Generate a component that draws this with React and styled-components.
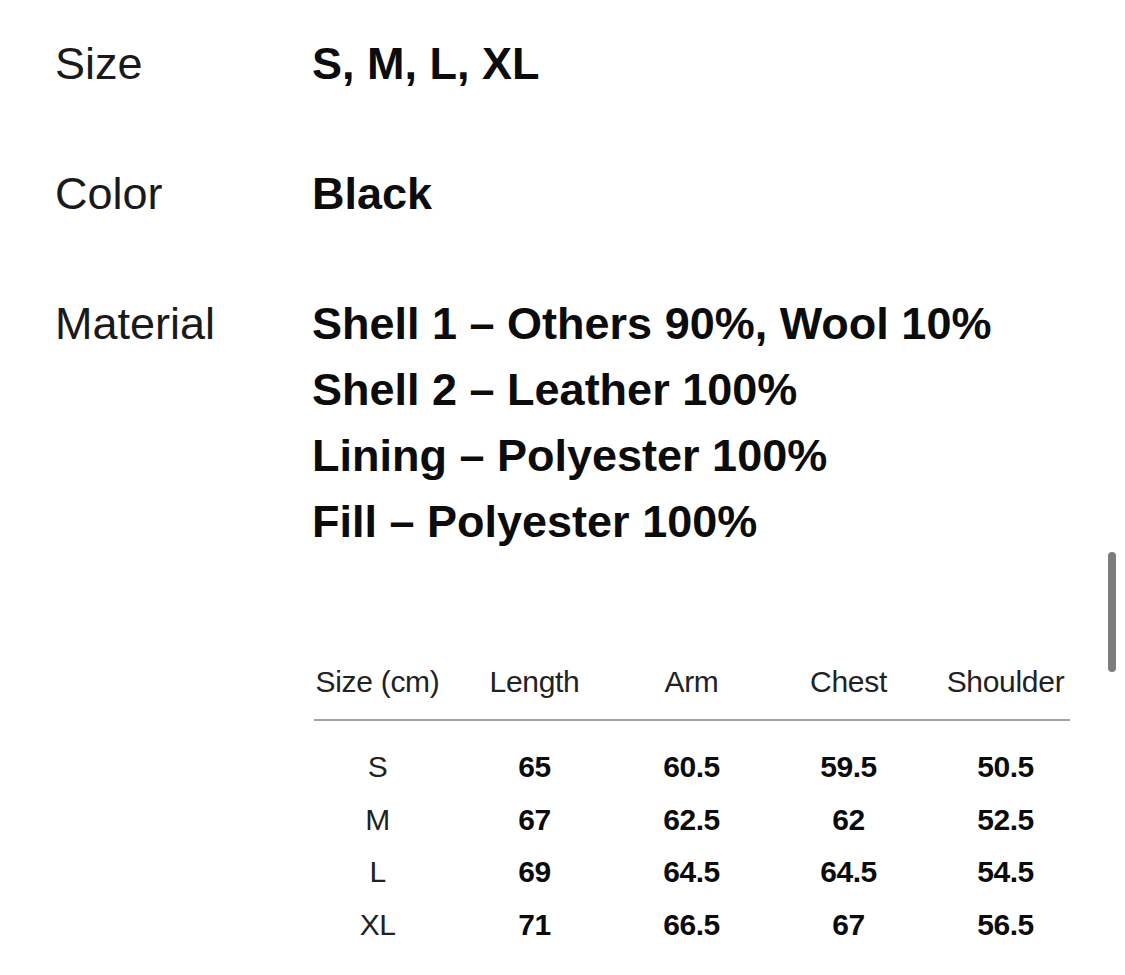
import React from 'react';
import styled, { createGlobalStyle } from 'styled-components';

const specs = [
  { label: 'Size', values: ['S, M, L, XL'] },
  { label: 'Color', values: ['Black'] },
  {
    label: 'Material',
    values: [
      'Shell 1 – Others 90%, Wool 10%',
      'Shell 2 – Leather 100%',
      'Lining – Polyester 100%',
      'Fill – Polyester 100%',
    ],
  },
];

const headers = ['Size (cm)', 'Length', 'Arm', 'Chest', 'Shoulder'];

const rows = [
  ['S', '65', '60.5', '59.5', '50.5'],
  ['M', '67', '62.5', '62', '52.5'],
  ['L', '69', '64.5', '64.5', '54.5'],
  ['XL', '71', '66.5', '67', '56.5'],
];

export default function App() {
  return (
    <>
      <GlobalStyle />
      <Page>
        <SpecList>
          {specs.map((spec) => (
            <SpecRow key={spec.label}>
              <Label>{spec.label}</Label>
              <Values>
                {spec.values.map((v) => (
                  <Value key={v}>{v}</Value>
                ))}
              </Values>
            </SpecRow>
          ))}
        </SpecList>
        <Table>
          <HeadRow>
            {headers.map((h) => (
              <HeadCell key={h}>{h}</HeadCell>
            ))}
          </HeadRow>
          <Divider />
          <Body>
            {rows.map((row) => (
              <DataRow key={row[0]}>
                {row.map((cell, i) => (
                  <Cell key={i} $bold={i > 0}>
                    {cell}
                  </Cell>
                ))}
              </DataRow>
            ))}
          </Body>
        </Table>
        <Scrollbar />
      </Page>
    </>
  );
}

const GlobalStyle = createGlobalStyle`
  html, body {
    margin: 0;
    padding: 0;
    background: #fff;
  }
  body {
    font-family: "Liberation Sans", Arial, Helvetica, sans-serif;
    color: #111;
  }
`;

const Page = styled.div`
  width: 1125px;
  height: 975px;
  box-sizing: border-box;
  padding: 31px 0 0 55px;
  overflow: hidden;
`;

const SpecList = styled.div`
  display: flex;
  flex-direction: column;
  gap: 64px;
`;

const SpecRow = styled.div`
  display: flex;
  align-items: flex-start;
`;

const Label = styled.div`
  width: 257px;
  flex-shrink: 0;
  font-size: 45px;
  line-height: 66px;
  color: #1a1a1a;
`;

const Values = styled.div`
  display: flex;
  flex-direction: column;
`;

const Value = styled.div`
  font-size: 45px;
  line-height: 66px;
  font-weight: 700;
  white-space: nowrap;
  color: #0c0c0c;
`;

const Table = styled.div`
  margin: 107px 0 0 244px;
  width: 785px;
`;

const HeadRow = styled.div`
  display: grid;
  grid-template-columns: repeat(5, 157px);
`;

const HeadCell = styled.div`
  text-align: center;
  font-size: 30px;
  line-height: 40px;
  color: #222;
  white-space: nowrap;
  letter-spacing: -0.3px;
`;

const Divider = styled.div`
  height: 2px;
  background: #a3a3a3;
  margin: 17px 14px 20px 15px;
`;

const Body = styled.div`
  display: flex;
  flex-direction: column;
`;

const DataRow = styled.div`
  display: grid;
  grid-template-columns: repeat(5, 157px);
`;

const Cell = styled.div`
  text-align: center;
  font-size: 30px;
  line-height: 52.5px;
  font-weight: ${(p) => (p.$bold ? 700 : 400)};
  letter-spacing: -0.5px;
  color: ${(p) => (p.$bold ? '#0c0c0c' : '#222')};
`;

const Scrollbar = styled.div`
  position: fixed;
  left: 1108px;
  top: 552px;
  width: 8px;
  height: 120px;
  border-radius: 4px;
  background: #7c7c7c;
`;
